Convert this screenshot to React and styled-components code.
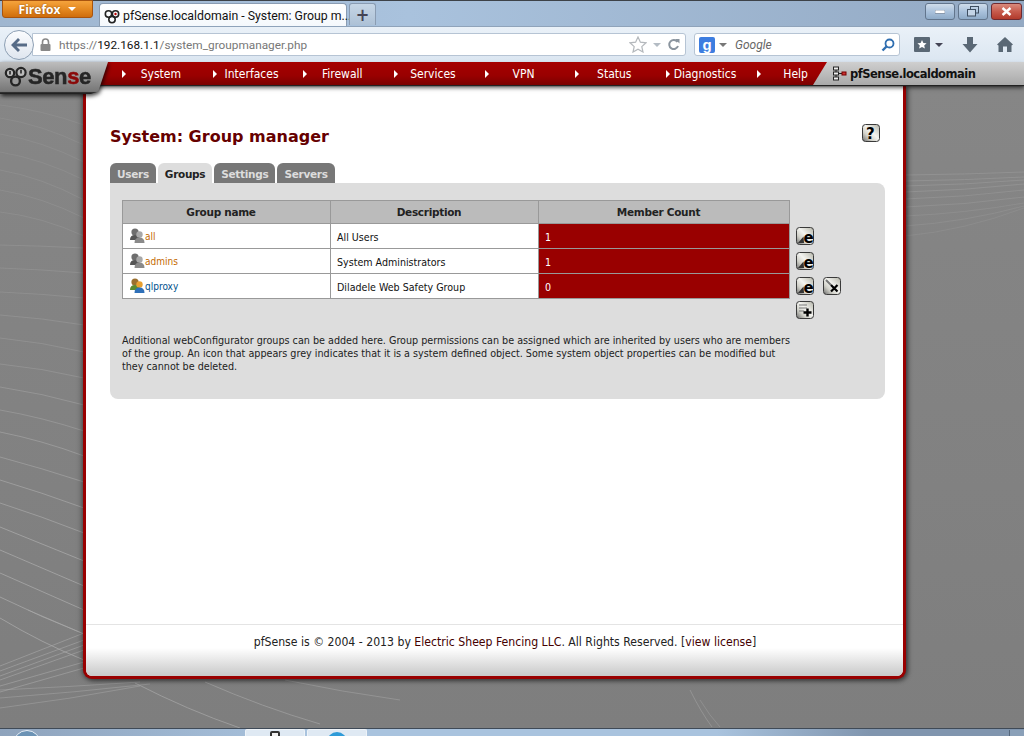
import styled, { createGlobalStyle } from 'styled-components';

const GlobalStyle = createGlobalStyle`
  html, body {
    margin: 0;
    padding: 0;
    width: 1024px;
    height: 736px;
    overflow: hidden;
    background: #7f7f7f;
    font-family: "DejaVu Sans Condensed", "DejaVu Sans", sans-serif;
  }
`;

const Screen = styled.div`
  position: relative;
  display: flex;
  flex-direction: column;
  width: 1024px;
  height: 736px;
  overflow: hidden;
`;

/* ---------- firefox chrome ---------- */

const TabStrip = styled.div`
  display: flex;
  align-items: flex-start;
  height: 26px;
  flex-shrink: 0;
  padding-left: 2px;
  border-top: 1px solid #3d4248;
  box-sizing: border-box;
  background: linear-gradient(to right, #9fb6d0 0%, #a9c2dd 40%, #93a9c3 100%);
`;

const FirefoxButton = styled.div`
  display: flex;
  width: 91px;
  height: 18px;
  margin-top: -1px;
  justify-content: center;
  align-items: center;
  gap: 8px;
  border-radius: 0 0 3px 3px;
  border: 1px solid #a8540f;
  box-sizing: border-box;
  background: linear-gradient(to bottom, #f5a33c 0%, #e58a22 50%, #cf6d0c 100%);
  color: #fff;
  font-family: "Open Sans", sans-serif;
  font-size: 12px;
  font-weight: 700;
  text-shadow: 0 0 2px #8a4a08;
`;

const Caret = styled.span`
  width: 0;
  height: 0;
  margin-left: ${({ $ml }) => $ml || 0}px;
  border-left: 4px solid transparent;
  border-right: 4px solid transparent;
  border-top: 4px solid ${({ $color }) => $color || '#fff'};
`;

const BrowserTab = styled.div`
  display: flex;
  width: 248px;
  height: 24px;
  margin: 2px 0 0 6px;
  padding: 0 4px;
  align-items: center;
  gap: 3px;
  box-sizing: border-box;
  border: 1px solid #8a9cb2;
  border-bottom: none;
  border-radius: 4px 4px 0 0;
  background: linear-gradient(to bottom, #fff 0%, #f4f8fc 100%);
  color: #111;
  font-family: Roboto, sans-serif;
  font-size: 12.3px;
  white-space: nowrap;

  svg {
    flex-shrink: 0;
  }
`;

const NewTab = styled.div`
  display: flex;
  width: 27px;
  height: 22px;
  margin: 2px 0 0 2px;
  justify-content: center;
  align-items: center;
  box-sizing: border-box;
  border: 1px solid #8a9cb2;
  border-bottom: none;
  border-radius: 3px 3px 0 0;
  background: linear-gradient(to bottom, #c6d6e6, #adc1d6);
  color: #445;
  font-size: 18px;
  font-weight: 700;
  line-height: 1;
`;

const WindowButtons = styled.div`
  display: flex;
  margin: 2px 2px 0 auto;
  gap: 3px;
`;

const WindowButton = styled.div`
  display: flex;
  width: ${({ $w }) => $w}px;
  height: 17px;
  justify-content: center;
  align-items: center;
  box-sizing: border-box;
  border: 1px solid ${({ $close }) => ($close ? '#6e2a30' : '#62758c')};
  border-radius: 3px;
  background: ${({ $close }) =>
    $close
      ? 'linear-gradient(to bottom, #d98a7c 0%, #c75b4d 50%, #b23a2c 100%)'
      : 'linear-gradient(to bottom, #cfdcea 0%, #aac2dc 50%, #8fabc8 100%)'};
`;

const NavBar = styled.div`
  display: flex;
  align-items: center;
  height: 36px;
  flex-shrink: 0;
  padding: 0 10px 0 4px;
  box-sizing: border-box;
  background: linear-gradient(to bottom, #eaf1f8 0%, #dbe6f1 100%);
  border-top: 1px solid #8fa3ba;
`;

const BackButton = styled.div`
  display: flex;
  width: 30px;
  height: 30px;
  flex-shrink: 0;
  justify-content: center;
  align-items: center;
  box-sizing: border-box;
  border-radius: 50%;
  border: 1px solid #8ea0b4;
  background: linear-gradient(to bottom, #fbfcfe, #dfe6ef);
  z-index: 1;
`;

const UrlBox = styled.div`
  display: flex;
  width: 654px;
  height: 23px;
  margin-left: -2px;
  padding: 0 5px 0 7px;
  align-items: center;
  box-sizing: border-box;
  border: 1px solid #b6c4d4;
  border-radius: 0 3px 3px 0;
  background: #fff;
  font-family: Roboto, sans-serif;
  font-size: 11.8px;
  color: #777;
`;

const UrlText = styled.span`
  margin-left: 8px;
  white-space: nowrap;
`;

const UrlHost = styled.span`
  color: #111;
`;

const UrlTools = styled.div`
  display: flex;
  margin-left: auto;
  align-items: center;
  gap: 6px;
`;

const SearchBox = styled.div`
  display: flex;
  width: 206px;
  height: 23px;
  margin-left: 8px;
  padding: 0 4px 0 4px;
  align-items: center;
  box-sizing: border-box;
  border: 1px solid #b6c4d4;
  border-radius: 3px;
  background: #fff;
`;

const GoogleBadge = styled.div`
  display: flex;
  width: 16px;
  height: 16px;
  justify-content: center;
  align-items: center;
  border-radius: 2px;
  background: #3d7de0;
  color: #fff;
  font-family: "Liberation Sans", sans-serif;
  font-size: 15px;
  font-weight: 700;
`;

const SearchHint = styled.span`
  margin-left: 8px;
  font-family: Roboto, sans-serif;
  font-style: italic;
  font-size: 12px;
  color: #666;
`;

const SearchGo = styled.span`
  display: flex;
  margin-left: auto;
`;

const NavIcons = styled.div`
  display: flex;
  margin-left: 14px;
  align-items: center;
  gap: 19px;
`;

const BookmarkGroup = styled.div`
  display: flex;
  align-items: center;
  gap: 5px;
`;

/* ---------- pfsense menu ---------- */

const MenuBar = styled.div`
  position: relative;
  z-index: 3;
  display: flex;
  height: 23px;
  flex-shrink: 0;
  box-shadow: 0 1px 1px #222, 0 3px 4px rgba(0, 0, 0, 0.6);
  background: linear-gradient(to bottom, #a60000 0%, #990000 60%, #7a0000 100%);
`;

const LogoShadow = styled.div`
  position: absolute;
  left: 0;
  top: 0;
  filter: drop-shadow(1px 2px 2px rgba(0, 0, 0, 0.75));
`;

const LogoTab = styled.div`
  display: flex;
  width: 108px;
  height: 32px;
  padding: 4px 0 0 4px;
  align-items: flex-start;
  box-sizing: border-box;
  clip-path: polygon(0 0, 100% 0, 91% 92%, 84% 100%, 0 100%);
  background: linear-gradient(to bottom, #bdbdbd 0%, #8e8e8e 60%, #777 92%, #222 96%);
`;

const LogoText = styled.span`
  font-family: "Liberation Sans", sans-serif;
  font-size: 22px;
  font-weight: 700;
  line-height: 21px;
  letter-spacing: -0.4px;
  color: #262626;
  -webkit-text-stroke: 0.5px currentColor;
`;

const LogoRed = styled.span`
  color: #8a0a0a;
`;

const MenuItems = styled.div`
  display: grid;
  grid-template-columns: repeat(8, 90.7px);
  margin-left: 118px;
`;

const MenuItem = styled.div`
  display: flex;
  align-items: center;
  color: #fff;
  font-size: 12px;
`;

const MenuArrow = styled.span`
  width: 0;
  height: 0;
  margin-left: 4px;
  border-top: 4px solid transparent;
  border-bottom: 4px solid transparent;
  border-left: 4px solid #fff;
`;

const MenuLabel = styled.span`
  flex: 1;
  padding-right: 13px;
  text-align: center;
`;

const HostTab = styled.div`
  position: absolute;
  right: 0;
  top: 0;
  display: flex;
  width: 211px;
  height: 23px;
  padding-left: 19px;
  align-items: center;
  gap: 3px;
  box-sizing: border-box;
  clip-path: polygon(14px 0, 100% 0, 100% 100%, 0 100%);
  background: linear-gradient(to bottom, #cfcfcf 0%, #a9a9a9 100%);
  color: #111;
  font-family: "DejaVu Sans", sans-serif;
  font-size: 11.5px;
  font-weight: 700;
  letter-spacing: -0.5px;
`;

/* ---------- page ---------- */

const Page = styled.div`
  position: relative;
  flex: 1;
  min-height: 0;
  padding: 0 118px 0 83px;
  background: #7f7f7f;
`;

const Wallpaper = styled.svg`
  position: absolute;
  left: 0;
  top: 0;
`;

const Panel = styled.main`
  position: relative;
  display: flex;
  flex-direction: column;
  height: 594px;
  box-sizing: border-box;
  border: 3px solid #990000;
  border-top: none;
  border-radius: 0 0 9px 9px;
  background: #fff;
  box-shadow: 0 0 6px rgba(0, 0, 0, 0.6), 2px 2px 4px rgba(0, 0, 0, 0.3);
`;

const Content = styled.div`
  flex: 1;
  padding: 38px 18px 0 24px;
`;

const TitleRow = styled.div`
  display: flex;
  height: 40px;
  justify-content: space-between;
  align-items: flex-start;
`;

const Title = styled.h1`
  margin: 3px 0 0;
  font-family: "DejaVu Sans", sans-serif;
  font-size: 16px;
  font-weight: 700;
  line-height: 22px;
  color: #600;
`;

const HelpWrap = styled.div`
  margin: 1px 5px 0 0;
`;

const Tabs = styled.div`
  display: flex;
  height: 20px;
  gap: 2px;
`;

const Tab = styled.div`
  display: flex;
  padding: 1px 7px 0;
  align-items: center;
  border-radius: 6px 6px 0 0;
  background: ${({ $active }) => ($active ? '#ddd' : '#777')};
  color: ${({ $active }) => ($active ? '#222' : '#ddd')};
  font-family: "DejaVu Sans", sans-serif;
  font-size: 10.5px;
  font-weight: 700;
  letter-spacing: -0.3px;
`;

const TabBox = styled.div`
  height: 216px;
  padding: 17px 12px 0;
  box-sizing: border-box;
  border-radius: 0 8px 8px 8px;
  background: #ddd;
`;

const Table = styled.table`
  border-collapse: collapse;
  font-size: 10.6px;
  color: #111;
`;

const HeadCell = styled.th`
  width: ${({ $w }) => $w}px;
  height: 23px;
  padding: 0 11px 0 0;
  box-sizing: border-box;
  border: 1px solid #999;
  background: #bbb;
  font-family: "DejaVu Sans", sans-serif;
  font-size: 10.5px;
  font-weight: 700;
  letter-spacing: -0.3px;
  color: #222;
`;

const Cell = styled.td`
  height: 25px;
  padding: 2px 0 0 6px;
  box-sizing: border-box;
  border: 1px solid #999;
  background: ${({ $red }) => ($red ? '#990000' : '#fff')};
  color: ${({ $red }) => ($red ? '#fff' : '#111')};
`;

const NameCell = styled(Cell)`
  padding: 0 0 0 7px;
`;

const NameWrap = styled.div`
  display: flex;
  align-items: center;
  margin-bottom: 1px;
  color: ${({ $link }) => $link};
  font-size: 10px;
`;

const NameLabel = styled.span`
  padding-top: 2px;
`;

const ActionCell = styled.td`
  padding: ${({ $top }) => $top || 0}px 0 0 6px;
  vertical-align: middle;
`;

const Actions = styled.div`
  display: flex;
  gap: 9px;
`;

const Note = styled.p`
  width: 668px;
  margin: 15px 0 0;
  font-size: 10.7px;
  line-height: 13px;
  color: #222;
`;

const Footer = styled.footer`
  display: flex;
  height: 52px;
  padding: 10px 0 0 21px;
  justify-content: center;
  box-sizing: border-box;
  border-top: 1px solid #e4e4e4;
  font-size: 12.15px;
  color: #222;
`;

const FooterLink = styled.span`
  color: #400;
`;

const FooterFade = styled.div`
  height: 28px;
  margin: -28px 0 0;
  border-radius: 0 0 6px 6px;
  background: linear-gradient(to bottom, rgba(204, 204, 204, 0), #c8c8c8);
`;

const Taskbar = styled.div`
  display: flex;
  height: 8px;
  flex-shrink: 0;
  padding-top: 1px;
  box-sizing: border-box;
  overflow: hidden;
  border-top: 1px solid #3f4a57;
  background: linear-gradient(to right, #8ea3bc 0%, #a9c3de 30%, #a9c3de 70%, #8095ae 85%);
`;

const StartOrb = styled.div`
  width: 28px;
  height: 28px;
  margin-left: 13px;
  flex-shrink: 0;
  box-sizing: border-box;
  border: 1px solid #e6eef6;
  border-radius: 50%;
  background: #6c93b5;
`;

const TaskButton = styled.div`
  display: flex;
  width: ${({ $w }) => $w}px;
  margin: -1px 0 0 ${({ $gap }) => $gap}px;
  justify-content: center;
  flex-shrink: 0;
  box-sizing: border-box;
  border: 1px solid #eef3f8;
  border-bottom: none;
  border-radius: 2px 2px 0 0;
  background: #dfe9f3;
`;

const TaskGlyph = styled.span`
  width: ${({ $round }) => ($round ? 20 : 10)}px;
  height: 20px;
  margin-top: ${({ $round }) => ($round ? 2 : 1)}px;
  box-sizing: border-box;
  border: ${({ $round }) => ($round ? 'none' : '2px solid #333')};
  border-radius: ${({ $round }) => ($round ? '50%' : '2px')};
  background: ${({ $round }) => ($round ? '#2f9bd8' : '#f2f2f2')};
`;

const TrayButton = styled.div`
  width: 14px;
  margin-left: auto;
  border-left: 1px solid #55677c;
  background: #8aa0b8;
`;

/* ---------- drawings ---------- */

const PfIcon = ({ size = 16 }) => (
  <svg width={size} height={size} viewBox="0 0 16 16">
    <circle cx="4.5" cy="6" r="3.2" fill="none" stroke="#222" strokeWidth="1.6" />
    <circle cx="11.5" cy="6" r="3.2" fill="none" stroke="#222" strokeWidth="1.6" />
    <circle cx="8" cy="11.6" r="3.2" fill="none" stroke="#222" strokeWidth="1.6" />
    <circle cx="11.5" cy="6" r="1.2" fill="#b00" />
  </svg>
);

const BackArrow = () => (
  <svg width="18" height="16" viewBox="0 0 18 16">
    <path d="M8 1 L1 8 L8 15 L10 13 L6.5 9.5 H17 V6.5 H6.5 L10 3 Z" fill="#566b86" />
  </svg>
);

const Lock = () => (
  <svg width="11" height="13" viewBox="0 0 11 13">
    <path d="M2.5 6 V4 a3 3 0 0 1 6 0 V6" fill="none" stroke="#888" strokeWidth="1.6" />
    <rect x="0.5" y="6" width="10" height="7" rx="1" fill="#888" />
  </svg>
);

const Star = () => (
  <svg width="18" height="17" viewBox="0 0 18 17">
    <path
      d="M9 1 L11.4 6.2 L17 6.8 L12.8 10.6 L14 16 L9 13.2 L4 16 L5.2 10.6 L1 6.8 L6.6 6.2 Z"
      fill="#fff"
      stroke="#b4b8bc"
      strokeWidth="1.2"
    />
  </svg>
);

const Reload = () => (
  <svg width="13" height="13" viewBox="0 0 13 13">
    <path d="M10.5 4 A4.5 4.5 0 1 0 11 8" fill="none" stroke="#8a949e" strokeWidth="2" />
    <path d="M8 1 H12.5 V5.5 Z" fill="#8a949e" />
  </svg>
);

const Magnifier = () => (
  <svg width="14" height="14" viewBox="0 0 14 14">
    <circle cx="8.5" cy="5.5" r="4" fill="none" stroke="#2f6eb0" strokeWidth="1.8" />
    <path d="M5.5 8.5 L1.5 12.5" stroke="#2f6eb0" strokeWidth="2.4" />
  </svg>
);

const Bookmarks = () => (
  <svg width="16" height="15" viewBox="0 0 16 15">
    <rect width="16" height="15" rx="1" fill="#5a6875" />
    <path
      d="M8 3 L9.4 6 L12.6 6.3 L10.2 8.4 L10.9 11.5 L8 9.9 L5.1 11.5 L5.8 8.4 L3.4 6.3 L6.6 6 Z"
      fill="#fff"
    />
  </svg>
);

const Download = () => (
  <svg width="16" height="16" viewBox="0 0 16 16">
    <path d="M5 0 H11 V7 H15.5 L8 15.5 L0.5 7 H5 Z" fill="#5a6875" />
  </svg>
);

const Home = () => (
  <svg width="16" height="15" viewBox="0 0 16 15">
    <path d="M8 0 L16 7.5 L14.5 8.5 V15 H10 V9.5 H6 V15 H1.5 V8.5 L0 7.5 Z" fill="#5a6875" />
  </svg>
);

const Minimize = () => (
  <svg width="10" height="4" viewBox="0 0 10 4">
    <rect width="10" height="3.5" fill="#fff" stroke="#5a6d84" strokeWidth="0.6" />
  </svg>
);

const Restore = () => (
  <svg width="12" height="11" viewBox="0 0 12 11">
    <rect x="3.5" y="0.5" width="8" height="6.5" fill="none" stroke="#3e4e60" />
    <rect x="0.5" y="3.5" width="8" height="6.5" fill="#c3d4e6" stroke="#3e4e60" />
  </svg>
);

const CloseX = () => (
  <svg width="11" height="9" viewBox="0 0 11 9">
    <path d="M1.5 1 L9.5 8 M9.5 1 L1.5 8" stroke="#fff" strokeWidth="2.4" />
  </svg>
);

const LogoMark = () => (
  <svg width="24" height="21" viewBox="0 0 24 21">
    <circle cx="6" cy="7" r="4.2" fill="#bbb" stroke="#262626" strokeWidth="2.2" />
    <circle cx="17" cy="6.5" r="4.6" fill="#bbb" stroke="#262626" strokeWidth="2.2" />
    <circle cx="11.5" cy="15" r="4.4" fill="#999" stroke="#262626" strokeWidth="2.4" />
    <path d="M17 3.8 V7.5 M6 5 V8.5" stroke="#262626" strokeWidth="1.6" />
  </svg>
);

const NetworkIcon = () => (
  <svg width="15" height="15" viewBox="0 0 15 15">
    <path d="M4 1 V14 M4 7.5 H12" stroke="#222" strokeWidth="1" fill="none" />
    <rect x="1.5" y="1" width="5" height="3" fill="#eee" stroke="#222" />
    <rect x="1.5" y="6" width="5" height="3" fill="#eee" stroke="#222" />
    <rect x="1.5" y="11" width="5" height="3" fill="#eee" stroke="#222" />
    <rect x="10" y="6" width="4" height="3" fill="#c33" stroke="#700" />
  </svg>
);

// glossy metal button behind the edit / delete / add / help glyphs
const IconFrame = ({ children }) => (
  <svg width="18" height="18" viewBox="0 0 18 18">
    <defs>
      <linearGradient id="frame" x1="1" y1="0" x2="0" y2="1">
        <stop offset="0" stopColor="#b4b4a8" />
        <stop offset="0.45" stopColor="#f4f4f0" />
        <stop offset="0.7" stopColor="#d0d0c8" />
        <stop offset="1" stopColor="#666" />
      </linearGradient>
    </defs>
    <rect x="0.5" y="0.5" width="17" height="17" rx="3" fill="url(#frame)" stroke="#3a3a3a" />
    {children}
  </svg>
);

const EditIcon = () => (
  <IconFrame>
    <path d="M2 16 L7.5 9.5 L8 16 Z" fill="#333" />
    <text x="7.5" y="15.5" fontFamily="DejaVu Sans" fontSize="15" fontWeight="700" fill="#000">e</text>
  </IconFrame>
);

const DeleteIcon = () => (
  <IconFrame>
    <path d="M3 3 L8 8" stroke="#777" strokeWidth="2" />
    <path d="M8 8 L14.5 14.5 M14.5 8 L8 14.5" stroke="#000" strokeWidth="2.2" />
  </IconFrame>
);

const AddIcon = () => (
  <IconFrame>
    <path d="M3 4 H11 M3 7 H11 M3 10 H8" stroke="#777" strokeWidth="1" />
    <path d="M11.5 7.5 V15.5 M7.5 11.5 H15.5" stroke="#000" strokeWidth="2.4" />
  </IconFrame>
);

const HelpIcon = () => (
  <IconFrame>
    <text x="4" y="14.5" fontFamily="DejaVu Sans" fontSize="15" fontWeight="700" fill="#000">?</text>
  </IconFrame>
);

const GroupIcon = ({ user }) => {
  const head = user ? '#e8a030' : '#a8a8a8';
  const back = user ? '#9a7030' : '#6e6e6e';
  const body = user ? '#2f70b8' : '#8a8a8a';
  return (
    <svg width="15" height="15" viewBox="0 0 15 15">
      <circle cx="5" cy="4" r="3.6" fill={back} />
      <path d="M0 12 Q0 7 5 7 Q10 7 10 12 Z" fill={user ? '#5c8a30' : '#555'} />
      <circle cx="9.5" cy="6.5" r="3.2" fill={head} />
      <path d="M4.5 15 Q4.5 9.5 9.5 9.5 Q14.5 9.5 14.5 15 Z" fill={body} />
    </svg>
  );
};

// wallpaper strokes in screen coordinates: [x0, y0, x1, y1, bend, opacity]
const wallLines = [
  [0, 105, 84, 125, 0.25, 0.2], [0, 118, 84, 145, 0.25, 0.2], [0, 134, 84, 162, 0.25, 0.2],
  [0, 152, 84, 180, 0.25, 0.2], [0, 170, 84, 200, 0.25, 0.25], [0, 190, 84, 218, 0.25, 0.25],
  [0, 212, 84, 236, 0.2, 0.25], [0, 245, 84, 248, 0.3, 0.3], [0, 268, 84, 273, 0.3, 0.3],
  [0, 292, 84, 298, 0.3, 0.3], [0, 315, 84, 325, 0.3, 0.35], [0, 338, 84, 352, 0.3, 0.35],
  [0, 364, 84, 378, 0.3, 0.4], [0, 387, 84, 405, 0.35, 0.5], [0, 410, 84, 431, 0.35, 0.5],
  [0, 432, 84, 456, 0.35, 0.6], [0, 457, 84, 482, 0.45, 0.6], [0, 480, 84, 508, 0.45, 0.7],
  [0, 503, 84, 533, 0.45, 0.7], [0, 527, 84, 561, 0.5, 0.8], [0, 550, 84, 586, 0.5, 0.8],
  [0, 573, 84, 610, 0.5, 0.8], [0, 597, 84, 634, 0.55, 0.8], [0, 618, 84, 660, 0.6, 0.8],
  [28, 610, 84, 634, 0.5, 0.6],
  [0, 666, 84, 633, 0.5, 0.6], [0, 671, 84, 640, 0.5, 0.6], [0, 676, 84, 645, 0.5, 0.6],
  [0, 680, 84, 650, 0.5, 0.6], [0, 686, 84, 662, 0.5, 0.6], [0, 692, 84, 668, 0.5, 0.6],
  [0, 690, 140, 682, 0.4, 0.5], [0, 698, 150, 684, 0.4, 0.5], [0, 708, 140, 686, 0.4, 0.5],
  [135, 683, 240, 728, 0.6, 0.7], [205, 682, 320, 724, 0.6, 0.6], [285, 680, 400, 700, 0.6, 0.5],
  [690, 690, 712, 727, 0.6, 0.5], [700, 700, 720, 727, 0.6, 0.4],
  [905, 175, 1024, 172, 0.2, 0.35], [905, 181, 1024, 177, 0.2, 0.35], [905, 186, 1024, 180, 0.2, 0.35],
  [905, 192, 1024, 184, 0.2, 0.35], [905, 199, 1024, 190, 0.2, 0.3], [905, 207, 1024, 197, 0.2, 0.3],
  [905, 216, 1024, 203, 0.2, 0.25], [905, 226, 1024, 206, 0.2, 0.25], [905, 236, 1024, 208, 0.2, 0.2],
];

const WallpaperLines = () => (
  <Wallpaper width="1024" height="643" viewBox="0 85 1024 643">
    <defs>
      <linearGradient id="wall" x1="0" y1="0" x2="0" y2="1">
        <stop offset="0" stopColor="#868686" />
        <stop offset="1" stopColor="#7e7e7e" />
      </linearGradient>
    </defs>
    <rect y="85" width="1024" height="643" fill="url(#wall)" />
    <g fill="none" stroke="#a8a8a8" strokeWidth="1">
      {wallLines.map(([x0, y0, x1, y1, bend, opacity]) => (
        <path
          key={`${x0}-${y0}-${x1}`}
          opacity={opacity}
          d={`M${x0} ${y0} Q${(x0 + x1) / 2} ${y0 + (y1 - y0) * bend} ${x1} ${y1}`}
        />
      ))}
    </g>
  </Wallpaper>
);

const menu = ['System', 'Interfaces', 'Firewall', 'Services', 'VPN', 'Status', 'Diagnostics', 'Help'];

const groups = [
  { name: 'all', link: '#c46a00', desc: 'All Users', count: 1 },
  { name: 'admins', link: '#c46a00', desc: 'System Administrators', count: 1 },
  { name: 'qlproxy', link: '#00508c', desc: 'Diladele Web Safety Group', count: 0, user: true },
];

export default function App() {
  return (
    <Screen>
      <GlobalStyle />
      <TabStrip>
        <FirefoxButton>
          Firefox <Caret />
        </FirefoxButton>
        <BrowserTab>
          <PfIcon />
          pfSense.localdomain - System: Group m...
        </BrowserTab>
        <NewTab>+</NewTab>
        <WindowButtons>
          <WindowButton $w={30}><Minimize /></WindowButton>
          <WindowButton $w={30}><Restore /></WindowButton>
          <WindowButton $w={31} $close><CloseX /></WindowButton>
        </WindowButtons>
      </TabStrip>
      <NavBar>
        <BackButton><BackArrow /></BackButton>
        <UrlBox>
          <Lock />
          <UrlText>
            https://<UrlHost>192.168.1.1</UrlHost>/system_groupmanager.php
          </UrlText>
          <UrlTools>
            <Star />
            <Caret $color="#b4bcc4" />
            <Reload />
          </UrlTools>
        </UrlBox>
        <SearchBox>
          <GoogleBadge>g</GoogleBadge>
          <Caret $color="#777" $ml={4} />
          <SearchHint>Google</SearchHint>
          <SearchGo><Magnifier /></SearchGo>
        </SearchBox>
        <NavIcons>
          <BookmarkGroup>
            <Bookmarks />
            <Caret $color="#445" />
          </BookmarkGroup>
          <Download />
          <Home />
        </NavIcons>
      </NavBar>
      <MenuBar>
        <LogoShadow>
          <LogoTab>
            <LogoMark />
            <LogoText>Sen<LogoRed>s</LogoRed>e</LogoText>
          </LogoTab>
        </LogoShadow>
        <MenuItems>
          {menu.map((item) => (
            <MenuItem key={item}>
              <MenuArrow />
              <MenuLabel>{item}</MenuLabel>
            </MenuItem>
          ))}
        </MenuItems>
        <HostTab>
          <NetworkIcon />
          pfSense.localdomain
        </HostTab>
      </MenuBar>
      <Page>
        <WallpaperLines />
        <Panel>
          <Content>
            <TitleRow>
              <Title>System: Group manager</Title>
              <HelpWrap><HelpIcon /></HelpWrap>
            </TitleRow>
            <Tabs>
              <Tab>Users</Tab>
              <Tab $active>Groups</Tab>
              <Tab>Settings</Tab>
              <Tab>Servers</Tab>
            </Tabs>
            <TabBox>
              <Table>
                <thead>
                  <tr>
                    <HeadCell $w={208}>Group name</HeadCell>
                    <HeadCell $w={208}>Description</HeadCell>
                    <HeadCell $w={251}>Member Count</HeadCell>
                  </tr>
                </thead>
                <tbody>
                  {groups.map((g) => (
                    <tr key={g.name}>
                      <NameCell>
                        <NameWrap $link={g.link}>
                          <GroupIcon user={g.user} />
                          <NameLabel>{g.name}</NameLabel>
                        </NameWrap>
                      </NameCell>
                      <Cell>{g.desc}</Cell>
                      <Cell $red>{g.count}</Cell>
                      <ActionCell>
                        <Actions>
                          <EditIcon />
                          {g.user && <DeleteIcon />}
                        </Actions>
                      </ActionCell>
                    </tr>
                  ))}
                  <tr>
                    <td colSpan={3} />
                    <ActionCell $top={2}>
                      <Actions>
                        <AddIcon />
                      </Actions>
                    </ActionCell>
                  </tr>
                </tbody>
              </Table>
              <Note>
                Additional webConfigurator groups can be added here. Group permissions can be
                assigned which are inherited by users who are members of the group. An icon that
                appears grey indicates that it is a system defined object. Some system object
                properties can be modified but they cannot be deleted.
              </Note>
            </TabBox>
          </Content>
          <Footer>
            pfSense is ©&nbsp;2004 - 2013 by&nbsp;
            <FooterLink>Electric Sheep Fencing LLC</FooterLink>. All Rights Reserved. [
            <FooterLink>view license</FooterLink>]
          </Footer>
          <FooterFade />
        </Panel>
      </Page>
      <Taskbar>
        <StartOrb />
        <TaskButton $w={60} $gap={204}><TaskGlyph /></TaskButton>
        <TaskButton $w={60} $gap={2}><TaskGlyph $round /></TaskButton>
        <TrayButton />
      </Taskbar>
    </Screen>
  );
}
